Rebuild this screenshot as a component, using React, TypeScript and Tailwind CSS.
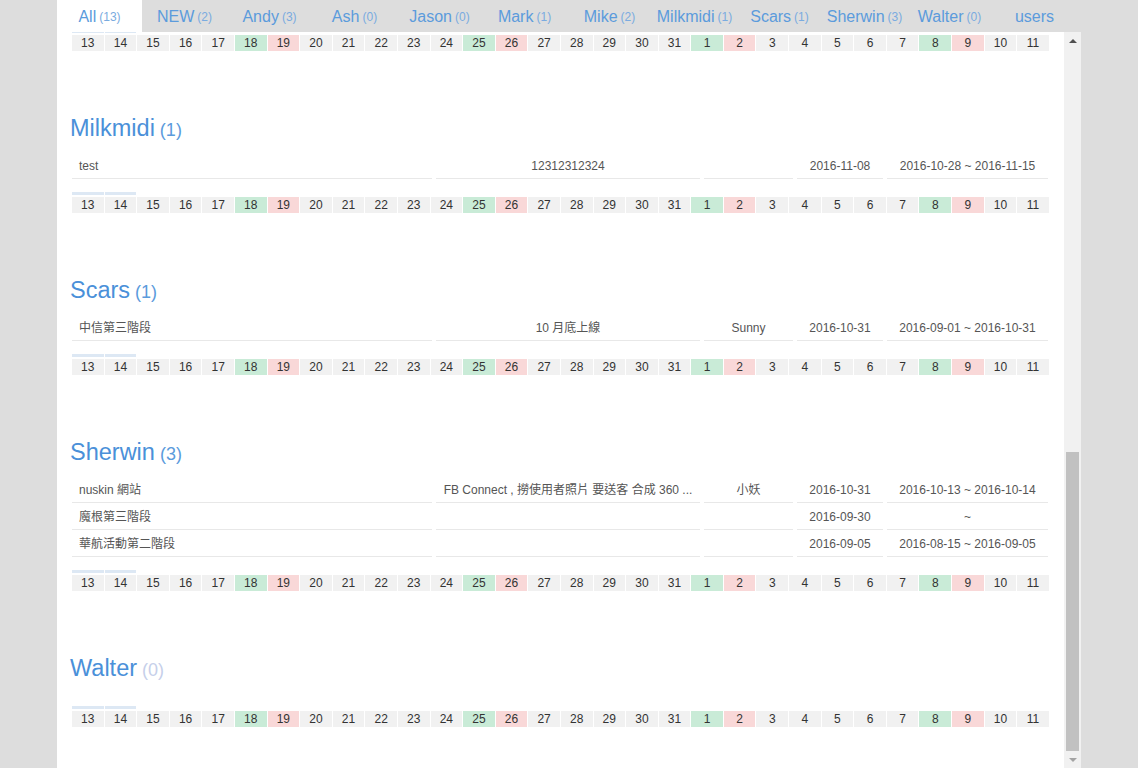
import React from 'react';

type Row = { name: string; desc?: string; owner?: string; date: string; range: string };

const tabs = [
  { name: 'All', count: 13, active: true },
  { name: 'NEW', count: 2 },
  { name: 'Andy', count: 3 },
  { name: 'Ash', count: 0 },
  { name: 'Jason', count: 0 },
  { name: 'Mark', count: 1 },
  { name: 'Mike', count: 2 },
  { name: 'Milkmidi', count: 1 },
  { name: 'Scars', count: 1 },
  { name: 'Sherwin', count: 3 },
  { name: 'Walter', count: 0 },
  { name: 'users' },
];

const days = [13, 14, 15, 16, 17, 18, 19, 20, 21, 22, 23, 24, 25, 26, 27, 28, 29, 30, 31, 1, 2, 3, 4, 5, 6, 7, 8, 9, 10, 11];
const greens = [18, 25, 1, 8];
const reds = [19, 26, 2, 9];

const sections: { name: string; rows: Row[] }[] = [
  {
    name: 'Milkmidi',
    rows: [{ name: 'test', desc: '12312312324', date: '2016-11-08', range: '2016-10-28 ~ 2016-11-15' }],
  },
  {
    name: 'Scars',
    rows: [{ name: '中信第三階段', desc: '10 月底上線', owner: 'Sunny', date: '2016-10-31', range: '2016-09-01 ~ 2016-10-31' }],
  },
  {
    name: 'Sherwin',
    rows: [
      { name: 'nuskin 網站', desc: 'FB Connect , 撈使用者照片 要送客 合成 360 ...', owner: '小妖', date: '2016-10-31', range: '2016-10-13 ~ 2016-10-14' },
      { name: '魔根第三階段', date: '2016-09-30', range: '~' },
      { name: '華航活動第二階段', date: '2016-09-05', range: '2016-08-15 ~ 2016-09-05' },
    ],
  },
  { name: 'Walter', rows: [] },
];

function DateStrip() {
  return (
    <div className="mt-[13px]">
      {/* today marker */}
      <div className="flex gap-px h-[3px]">
        {days.map((d, i) => (
          <div key={i} className={`flex-1 ${i < 2 ? 'bg-[#dde8f4]' : ''}`} />
        ))}
      </div>
      <div className="mt-[2px] flex gap-px">
        {days.map((d, i) => {
          const tone = greens.includes(d) ? 'bg-[#c9ebd7]' : reds.includes(d) ? 'bg-[#f9d8d8]' : 'bg-[#f1f1f1]';
          return (
            <div key={i} className={`flex-1 h-4 leading-[17px] text-center text-xs text-[#333] ${tone}`}>
              {d}
            </div>
          );
        })}
      </div>
    </div>
  );
}

function TaskRow({ row }: { row: Row }) {
  const cell = 'h-full flex items-center pt-[2px] border-b border-[#e8e8e8]';
  return (
    <div className="flex gap-1 h-[27px] text-xs text-[#555]">
      <div className={`${cell} w-[360px] pl-[7px]`}>{row.name}</div>
      <div className={`${cell} w-[264px] justify-center px-2 whitespace-nowrap overflow-hidden`}>{row.desc}</div>
      <div className={`${cell} w-[89px] justify-center`}>{row.owner}</div>
      <div className={`${cell} w-[86px] justify-center`}>{row.date}</div>
      <div className={`${cell} w-[161px] justify-center`}>{row.range}</div>
    </div>
  );
}

export default function App() {
  return (
    <div className="min-h-screen bg-[#dddddd] font-['Liberation_Sans','Noto_Sans_CJK_TC',sans-serif]">
      <div className="mx-auto w-[1024px] h-[768px] flex flex-col">
        {/* Tabs */}
        <nav className="flex h-8 shrink-0">
          {tabs.map((t) => (
            <div
              key={t.name}
              className={`w-[85px] h-8 pt-[2px] flex items-center justify-center whitespace-nowrap ${t.active ? 'bg-white' : ''}`}
            >
              <span className="text-[16px] text-[#5b9bdc]">{t.name}</span>
              {t.count !== undefined && <span className="ml-[3px] text-xs text-[#7aabe0]">({t.count})</span>}
            </div>
          ))}
        </nav>

        <div className="flex flex-1 min-h-0">
          <main className="flex-1 bg-white overflow-hidden px-[15px]">
            {/* tail of the previous section */}
            <div className="-mt-[15px] pb-[62px]">
              <DateStrip />
            </div>

            {sections.map((s) => (
              <section key={s.name} className="pb-[62px]">
                <h2 className="-ml-[2px] h-[30px] leading-[30px] text-[23.5px] text-[#4a90d9]">
                  {s.name}
                  <span className={`ml-[5px] text-[18px] ${s.rows.length ? 'text-[#5b9bdc]' : 'text-[#c6cfea]'}`}>
                    ({s.rows.length})
                  </span>
                </h2>
                <div className={`mt-[9px] ${s.rows.length ? '' : 'h-px'}`}>
                  {s.rows.map((r) => (
                    <TaskRow key={r.name} row={r} />
                  ))}
                </div>
                <DateStrip />
              </section>
            ))}
          </main>

          {/* Scrollbar */}
          <div className="w-[17px] shrink-0 bg-[#f1f1f1] flex flex-col">
            <div className="h-[17px] flex items-center justify-center">
              <div className="w-0 h-0 border-x-[4px] border-x-transparent border-b-[4px] border-b-[#505050]" />
            </div>
            <div className="flex-1 flex flex-col px-[2px]">
              <div className="h-[403px] shrink-0" />
              <div className="flex-1 bg-[#c1c1c1]" />
            </div>
            <div className="h-[17px] flex items-center justify-center">
              <div className="w-0 h-0 border-x-[4px] border-x-transparent border-t-[4px] border-t-[#a3a3a3]" />
            </div>
          </div>
        </div>
      </div>
    </div>
  );
}
